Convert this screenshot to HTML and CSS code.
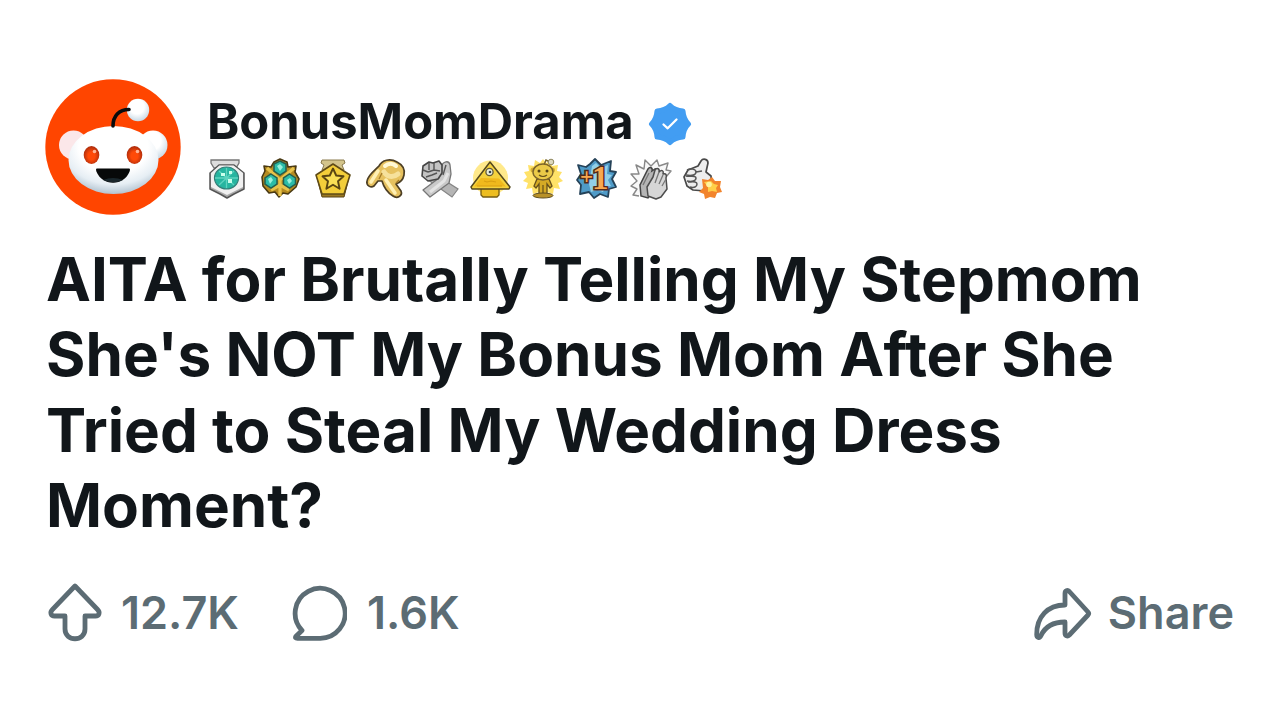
FILE: index.html
```html
<!DOCTYPE html>
<html lang="en">
<head>
  <meta charset="UTF-8" />
  <title>BonusMomDrama</title>
  <link rel="stylesheet" href="styles.css">
</head>
<body>
  <article class="post">
    <header class="post-header">
      <svg class="avatar" viewBox="10 9 136 136">
        <defs>
          <radialGradient id="head" cx=".5" cy=".3" r=".7">
            <stop offset=".55" stop-color="#fff" />
            <stop offset=".8" stop-color="#e6eef4" />
            <stop offset="1" stop-color="#b3c4d1" />
          </radialGradient>
          <radialGradient id="ball" cx=".45" cy=".35" r=".65">
            <stop offset=".5" stop-color="#fff" />
            <stop offset="1" stop-color="#c9dae6" />
          </radialGradient>
          <radialGradient id="eye" cx=".5" cy=".55" r=".55">
            <stop offset=".4" stop-color="#ff4a08" />
            <stop offset="1" stop-color="#a92b0c" />
          </radialGradient>
        </defs>
        <circle cx="78" cy="77" r="67.7" fill="#ff4500" />
        <circle cx="38.500" cy="75" r="14.5" fill="#fbe7e9" />
        <circle cx="118" cy="75" r="14.5" fill="url(#ball)" />
        <ellipse cx="78.500" cy="90" rx="45" ry="34" fill="url(#head)" />
        <circle cx="103" cy="40" r="11.2" fill="url(#ball)" />
        <path d="M78 56C78 46 84 39.5 94 39.5" fill="none" stroke="#090b0c" stroke-width="3.600" stroke-linecap="round" />
        <ellipse cx="56.5" cy="85" rx="7.8" ry="9" fill="url(#eye)" />
        <ellipse cx="99.5" cy="85" rx="7.8" ry="9" fill="url(#eye)" />
        <circle cx="59.5" cy="81.500" r="1.800" fill="#ffb596" />
        <circle cx="102.5" cy="81.500" r="1.800" fill="#ffb596" />
        <path d="M62 98.5h32c1.500 0 1 2 .4 3.500-2.800 6.500-8.800 10.700-16.400 10.700s-13.600-4.200-16.400-10.700c-.6-1.500-1.100-3.500.4-3.500z" fill="#070909" />
        <path d="M68 110q10-4 20 0-9 4.500-20 0z" fill="#1a272c" />
      </svg>
      <div class="author">
        <div class="author-line">
          <span class="username">BonusMomDrama</span>
          <svg class="verified" viewBox="0 0 44 44">
            <path d="M22 3.500Q27 8.500 35 9 35.500 17 40.500 22 35.500 27 35 35 27 35.500 22 40.500 17 35.500 9 35 8.500 27 3.500 22 8.500 17 9 9 17 8.500 22 3.500z" fill="#429df2" stroke="#429df2" stroke-width="5" stroke-linejoin="round" />
            <path d="M15.500 22.500L19.700 26.300 28.500 17.500" fill="none" stroke="#fff" stroke-width="2.300" stroke-linecap="round" stroke-linejoin="round" />
          </svg>
        </div>
        <div class="awards">
          <!-- hexagon gem -->
          <svg class="award" viewBox="0 0 40 40">
            <path d="M4 1h28v3l-3 5H7L4 4z" fill="#ddd" stroke="#777" stroke-width="1.300" />
            <path d="M12 6h15l10 8v16l-10 5-7 4-7-4-10-5V14z" fill="#aaa" stroke="#555" stroke-width="1.500" stroke-linejoin="round" />
            <path d="M12.500 6.500h14L36 14v14l-16 8-16-8V14z" fill="#f0f0f0" />
            <ellipse cx="19.500" cy="19" rx="12" ry="11" fill="#26b5a0" stroke="#357e78" stroke-width="1.200" />
            <path d="M19.500 9v20M8 19h23M12 12l15 14M27 12L12 26" stroke="#5ed3bf" stroke-width="1.300" />
            <path d="M14 14h4v3h-4zM21 20h4v4h-4zM22 12h3v3h-3z" fill="#caffec" />
          </svg>
          <!-- triple gem -->
          <svg class="award" viewBox="0 0 40 40">
            <path d="M14 3l6-3 7 3 1 5 8-1-1 6 4 7-3 8-8 7-5-1-4 4-4-5-6 1-6-7-1-9 3-6-1-5 7 1z" fill="#b58b20" stroke="#493913" stroke-width="1.600" stroke-linejoin="round" />
            <path d="M20 37V21L7 9M20 21L34 9M20 26l-9 5M20 26l9 5" fill="none" stroke="#e8c34b" stroke-width="3.200" />
            <g fill="#2bbca8" stroke="#245f50" stroke-width="1.500">
              <path d="M20 2l6 3v7l-6 4-6-4V5z" />
              <path d="M11 15l6 4v6l-6 4-6-4v-6z" />
              <path d="M29.500 15l6 4v6l-6 4-6-4v-6z" />
            </g>
            <path d="M17 7l3-2 3 3-3 4zM8 20l3-2 2 3-3 4zM27 21l3-2 2 3-3 3z" fill="#99f1dc" />
          </svg>
          <!-- star medal -->
          <svg class="award" viewBox="0 0 40 40">
            <path d="M9 1h22l1 3-3 2 2 5H9l2-5-3-2z" fill="#d3c48b" stroke="#8a7a4d" />
            <path d="M4 18l5 20h22l5-20z" fill="#9a7822" stroke="#5a4514" />
            <path d="M20 5l17 11-6 19H9L3 16z" fill="#f3ce3a" stroke="#5f4b17" stroke-width="1.600" stroke-linejoin="round" />
            <path d="M20 9.500l3.200 7 7.300.8-5.500 5 1.600 7.400-6.600-3.900-6.600 3.900 1.600-7.400-5.500-5 7.300-.8z" fill="#f9df55" stroke="#594512" stroke-width="1.900" stroke-linejoin="round" />
          </svg>
          <!-- pointing hand -->
          <svg class="award" viewBox="0 0 40 40">
            <path d="M13 7C16 1 24-1 31 3c6 3 8 8 7 13-1 5-5 8-8 9l5 7c2 5-4 8-8 5-5-3-9-8-11-15l-4 0-4 5c-3 2-8 0-7-5 1-6 7-10 12-15z" fill="#e6c15f" stroke="#4d3f24" stroke-width="1.700" stroke-linejoin="round" />
            <path d="M19 7c3-3 8-3 11 0" fill="none" stroke="#fff8d4" stroke-width="4" stroke-linecap="round" />
            <path d="M18 13c3 5 9 6 14 2" fill="none" stroke="#f6e19c" stroke-width="5" stroke-linecap="round" />
            <path d="M12 12l-7 11M20 21l9 13" fill="none" stroke="#fff0b4" stroke-width="3.500" stroke-linecap="round" />
            <path d="M13 20l3-6M30 24l3-3" fill="none" stroke="#a57b2a" stroke-width="1.300" />
          </svg>
          <!-- clasped hands -->
          <svg class="award" viewBox="0 0 40 40">
            <path d="M8 20l9-4 22 14-6 8z" fill="#b5b5b5" stroke="#858585" stroke-width="1.200" />
            <path d="M4 31l16-12 2-11c2-6 8-7 9-2l1 9-2 9L11 38z" fill="#c9c9c9" stroke="#777" stroke-width="1.300" stroke-linejoin="round" />
            <path d="M4 7l6-4 4 1 6-2 3 4 0 8-4 6-10 2-6-5z" fill="#c3c3c3" stroke="#454545" stroke-width="1.600" stroke-linejoin="round" />
            <path d="M10 4v7M15 4v7M4 11l5 2M9 13l6-2 6 1M7 18l6-2 5-2M27 6l-3 10" fill="none" stroke="#555" stroke-width="1.400" />
            <path d="M11 33l14-11 4-8" fill="none" stroke="#e4e4e4" stroke-width="3" />
          </svg>
          <!-- pyramid -->
          <svg class="award" viewBox="0 0 40 40">
            <circle cx="19.500" cy="19" r="17.500" fill="#ffe98b" />
            <path d="M10 29h18v7l-2 2H12l-2-2z" fill="#edbd20" stroke="#765c13" stroke-width="1.300" />
            <path d="M19 3l20 25-1 2H1l-1-2z" fill="#f5d23d" stroke="#54481e" stroke-width="1.500" stroke-linejoin="round" />
            <path d="M10 19l18 .5 7 8H3z" fill="#f0b91d" />
            <circle cx="18.500" cy="13" r="3.600" fill="#e9edda" stroke="#605a38" stroke-width="1.300" />
            <circle cx="19" cy="13" r="1.300" fill="#34414a" />
            <path d="M13 22l3 1 4-1 5 1M6 27h25" fill="none" stroke="#d9a012" stroke-width="1.200" />
          </svg>
          <!-- golden mascot -->
          <svg class="award" viewBox="0 0 40 40">
            <path d="M19 0l3 4 5-3 1 6 6-1-1 6 5 1-3 5 4 4-5 2 2 6-6-1-1 6-6-2-4 4-4-4-6 2-1-6-6 1 2-6-5-2 4-4-3-5 5-1-1-6 6 1 1-6 5 3z" fill="#ffe268" />
            <path d="M20 6l2-5 4 2" fill="none" stroke="#776326" stroke-width="1.500" />
            <circle cx="27" cy="3" r="2.800" fill="#ddd8bd" stroke="#8e875e" />
            <path d="M13 20h12l3 7-2 2-3-4v11h-8V25l-3 4-2-2z" fill="#d5aa25" stroke="#66501b" stroke-width="1.300" />
            <circle cx="9" cy="11" r="2.500" fill="#d5ae36" /><circle cx="28.500" cy="11" r="2.500" fill="#d5ae36" />
            <ellipse cx="19" cy="13" rx="10" ry="8" fill="#ebca48" stroke="#7c642a" stroke-width="1.400" />
            <circle cx="15" cy="12" r="1.500" fill="#554417" /><circle cx="23" cy="12" r="1.500" fill="#554417" />
            <path d="M15 16q4 3 8 0M19 26v9" fill="none" stroke="#65501b" stroke-width="1.200" />
            <ellipse cx="19" cy="36.500" rx="10" ry="2.500" fill="#b89128" stroke="#62501f" />
          </svg>
          <!-- plus one -->
          <svg class="award" viewBox="0 0 40 40">
            <path d="M13 5l5-5 6 6 10-4-1 10 6 1-4 7 4 8-7 2-1 8-8-3-6 4-5-6-9 2 1-9-4-5 4-6-3-9 8 2z" fill="#4f9bc8" stroke="#254258" stroke-width="1.800" stroke-linejoin="round" />
            <path d="M15 7l4-3 5 5 7-3-1 9 5 1-4 5 3 6-6 1-2 5-6-2-6 2-2-8z" fill="#92cfe8" />
            <text class="plus-one" x="3" y="30"><tspan class="plus" dy="-5">+</tspan><tspan dy="5" dx="-1">1</tspan></text>
          </svg>
          <!-- clapping hands -->
          <svg class="award" viewBox="0 0 40 40">
            <path d="M9 37l-6-1 4-6-6-3 6-5-6-7 8 0-3-9 8 4 1-9 6 6 6-6 2 6 9-3-2 7 5 1-5 6" fill="#f8f8f8" stroke="#888" stroke-width="1.400" stroke-linejoin="round" />
            <path d="M11 37l-1-11 8-16c2-3 5-1 4 2l3-2c3-1 4 1 2 4l-5 20-4 5z" fill="#b5b5b5" stroke="#444" stroke-width="1.500" />
            <path d="M18 37l-1-9 6-10 2-7c2-3 5-1 4 2 3-3 5-1 4 2 3-1 4 1 3 4l1 11-6 8-5 2z" fill="#d6d6d6" stroke="#4d4d4d" stroke-width="1.500" stroke-linejoin="round" />
            <path d="M29 13l-4 11M33 16l-4 9M36 20l-4 7M19 14l-6 12" fill="none" stroke="#777" stroke-width="1.300" />
          </svg>
          <!-- rocket like -->
          <svg class="award" viewBox="0 0 40 40">
            <path d="M5 11l10-4 3-5c2-3 7-2 7 2l-2 9 5 4 1 10-7 5-12-1-6-4-3-9z" fill="#ededed" stroke="#494949" stroke-width="1.700" stroke-linejoin="round" />
            <path d="M4 11c3-2 9-1 9 2s-4 4-10 3M3 17c3 1 10-1 10 2s-4 4-9 3M5 23c4 0 9-1 9 2s-3 4-7 3M13 13l6-1" fill="none" stroke="#555" stroke-width="1.500" />
            <path d="M19 20l6 1 4-3 3 4 6 0-1 6 2 5-5 1-2 5-5-1-5 2-1-5-5-2 4-4z" fill="#f2842c" />
            <path d="M21 23l7-1 3 3 4 1-2 3 1 4-5-1-4 1v-5z" fill="#ffcf48" />
            <circle cx="26" cy="25.500" r="2.800" fill="#fff3a0" />
          </svg>
        </div>
      </div>
    </header>

    <h1 class="title">AITA for Brutally Telling My Stepmom She's NOT My Bonus Mom After She Tried to Steal My Wedding Dress Moment?</h1>

    <footer class="actions">
      <div class="action">
        <svg class="icon icon-vote" viewBox="0 0 56 62">
          <path d="M28 4L50.500 27.500c3 3 1.500 6.500-2 6.500H38V47c0 13-20 13-20 0V34H7.500c-3.500 0-5-3.500-2-6.500z" />
        </svg>
        <span>12.7K</span>
      </div>
      <div class="action">
        <svg class="icon icon-comment" viewBox="0 0 56 58">
          <path d="M28.500 54.300A25 25 0 1 0 11 46.500L5 52.300Q3.500 54.300 6.500 54.300z" />
        </svg>
        <span>1.6K</span>
      </div>
      <div class="action action-share">
        <svg class="icon icon-share" viewBox="0 0 60 56">
          <path d="M32 20V8.500c0-3 2.500-3.800 4.300-2L55 27q1.300 1.500 0 3L36.300 50c-1.800 1.800-4.300 1-4.300-2V37C20 37 12.500 41 8 50.500c-1.500 3.300-4.300 2.300-4.300-1C3.700 32 14.500 20 32 20z" />
        </svg>
        <span>Share</span>
      </div>
    </footer>
  </article>
</body>
</html>
```
FILE: styles.css
```css
body {
  margin: 0;
  background: #fff;
  font-family: Inter, "Liberation Sans", sans-serif;
}
.post {
  box-sizing: border-box;
  width: 1280px;
  height: 720px;
  padding: 79px 46px 0 45px;
}
.post-header {
  display: flex;
  gap: 26px;
  height: 136px;
}
.avatar {
  width: 136px;
  height: 136px;
}
.author {
  padding-top: 14px;
}
.author-line {
  display: flex;
  align-items: center;
  gap: 14px;
  height: 58px;
}
.username {
  margin-top: -2px;
  color: #11161a;
  font-size: 48.900px;
  font-weight: 700;
}
.verified {
  width: 44px;
  height: 44px;
  margin-top: 3px;
}
.awards {
  display: flex;
  gap: 12.9px;
  margin-top: 8px;
}
.award {
  width: 40px;
  height: 40px;
  overflow: visible;
}
.plus-one {
  fill: #f9a850;
  stroke: #54291a;
  stroke-width: 3px;
  paint-order: stroke;
  font-family: "Liberation Serif", serif;
  font-size: 33px;
  font-weight: bold;
}
.plus {
  font-size: 23px;
}
.title {
  margin: 27px 0 0 1px;
  color: #11161a;
  font-size: 60.200px;
  font-weight: 700;
  line-height: 75.400px;
}
.actions {
  display: flex;
  align-items: center;
  margin-top: 38px;
  color: #5c6c74;
  font-size: 45px;
  font-weight: 600;
}
.action {
  display: flex;
  align-items: center;
  margin-right: 52px;
}
.action-share {
  margin: 0 0 0 auto;
}
.icon {
  fill: none;
  stroke: #5c6c74;
  stroke-width: 4.800px;
  stroke-linejoin: round;
}
.icon-vote {
  width: 56px;
  height: 62px;
  margin: 0 18px 0 2px;
}
.icon-comment {
  width: 56px;
  height: 58px;
  margin-right: 20px;
}
.icon-share {
  width: 60px;
  height: 56px;
  margin-right: 15px;
}
```
